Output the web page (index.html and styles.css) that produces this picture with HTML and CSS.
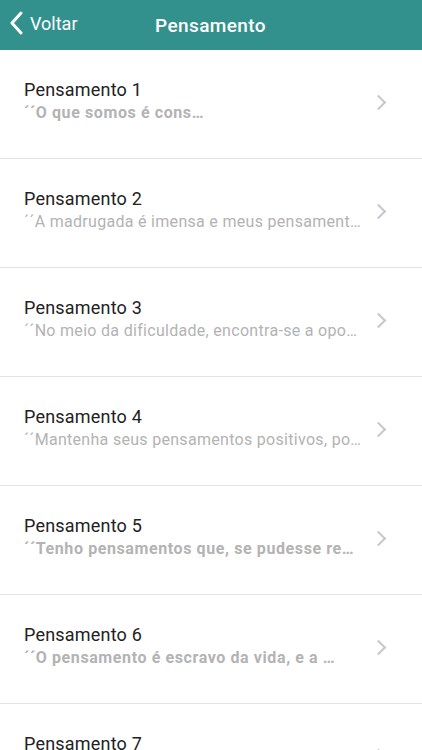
FILE: index.html
```html
<!DOCTYPE html>
<html>
<head>
  <title>Pensamento</title>
  <link rel="stylesheet" href="styles.css">
</head>
<body>
  <header class="topbar">
    <a class="back" href="#">
      <svg class="back-icon" width="14" height="24" viewBox="0 0 14 24">
        <path d="M12 2 L3 12 L12 22" fill="none" stroke="#fff" stroke-width="3" stroke-linecap="round" stroke-linejoin="round"/>
      </svg>
      <span>Voltar</span>
    </a>
    <h1 class="title">Pensamento</h1>
  </header>

  <ul class="list">
    <li class="row">
      <div class="text">
        <div class="row-title">Pensamento 1</div>
        <div class="row-sub bold">´´O que somos é cons…</div>
      </div>
      <span class="chev"></span>
    </li>
    <li class="row">
      <div class="text">
        <div class="row-title">Pensamento 2</div>
        <div class="row-sub">´´A madrugada é imensa e meus pensament…</div>
      </div>
      <span class="chev"></span>
    </li>
    <li class="row">
      <div class="text">
        <div class="row-title">Pensamento 3</div>
        <div class="row-sub">´´No meio da dificuldade, encontra-se a opo…</div>
      </div>
      <span class="chev"></span>
    </li>
    <li class="row">
      <div class="text">
        <div class="row-title">Pensamento 4</div>
        <div class="row-sub">´´Mantenha seus pensamentos positivos, po…</div>
      </div>
      <span class="chev"></span>
    </li>
    <li class="row">
      <div class="text">
        <div class="row-title">Pensamento 5</div>
        <div class="row-sub bold">´´Tenho pensamentos que, se pudesse re…</div>
      </div>
      <span class="chev"></span>
    </li>
    <li class="row">
      <div class="text">
        <div class="row-title">Pensamento 6</div>
        <div class="row-sub bold">´´O pensamento é escravo da vida, e a …</div>
      </div>
      <span class="chev"></span>
    </li>
    <li class="row">
      <div class="text">
        <div class="row-title">Pensamento 7</div>
        <div class="row-sub">´´</div>
      </div>
      <span class="chev"></span>
    </li>
  </ul>
</body>
</html>
```

FILE: styles.css
```css
body {
  margin: 0;
  padding: 0;
  background-color: #fff;
  font-family: Roboto, "Noto Sans", Arial, sans-serif;
  overflow: hidden;
}

.topbar {
  position: relative;
  height: 50px;
  background-color: #33918d;
  display: flex;
  align-items: center;
  justify-content: center;
}

.back {
  position: absolute;
  left: 9px;
  top: 11px;
  display: flex;
  align-items: center;
  gap: 7px;
  color: #fff;
  text-decoration: none;
  font-size: 18px;
}

.title {
  margin: 0 0 0 -1px;
  color: #fff;
  font-size: 19px;
  font-weight: 500;
  letter-spacing: 0.4px;
}

.list {
  list-style: none;
  margin: 0;
  padding: 0;
}

.row {
  height: 109px;
  border-bottom: 1px solid #e3e3e5;
  display: flex;
  align-items: center;
  padding: 0 38px 6px 24px;
  box-sizing: border-box;
}

.text {
  flex: 1;
  min-width: 0;
}

.row-title {
  font-size: 18px;
  line-height: 22px;
  color: #222;
  letter-spacing: 0.2px;
}

.row-sub {
  margin-top: 2px;
  font-size: 16px;
  line-height: 20px;
  color: #b3b3b3;
  white-space: nowrap;
  letter-spacing: 0.3px;
}

.row-sub.bold {
  font-weight: bold;
  letter-spacing: 0.6px;
}

.chev {
  width: 9px;
  height: 9px;
  border-top: 2px solid #c7c7cc;
  border-right: 2px solid #c7c7cc;
  transform: rotate(45deg);
  margin-top: 2px;
}
```
